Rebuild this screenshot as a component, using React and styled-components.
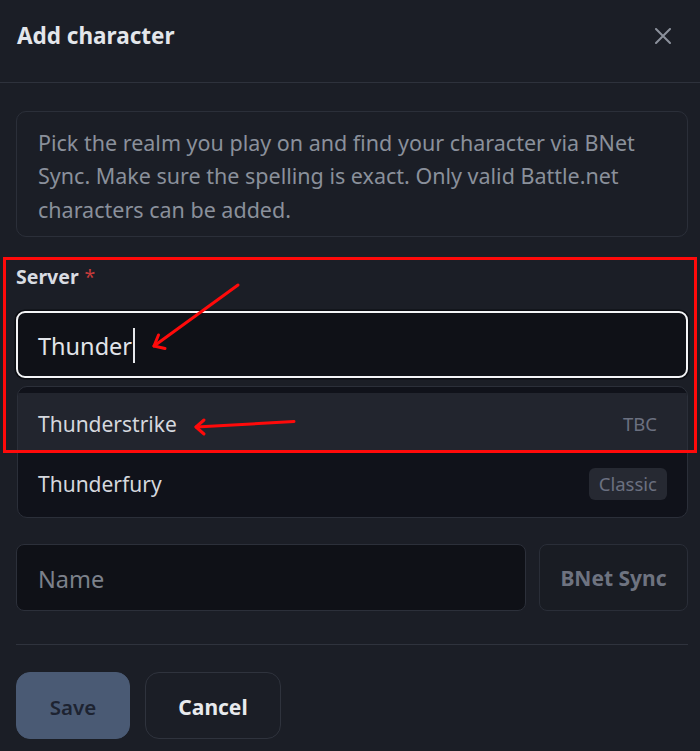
import React from "react";
import styled, { createGlobalStyle } from "styled-components";

const GlobalStyle = createGlobalStyle`
  html, body {
    margin: 0;
    padding: 0;
    background: #1b1e26;
  }
  body {
    font-family: "Noto Sans", "Open Sans", sans-serif;
    -webkit-font-smoothing: antialiased;
  }
  * { box-sizing: border-box; }
`;

const Page = styled.div`
  position: relative;
  width: 700px;
  min-height: 751px;
  background: #1b1e26;
  overflow: hidden;
`;

const Header = styled.header`
  display: flex;
  align-items: center;
  justify-content: space-between;
  padding: 21px 28px 31px 17px;
  border-bottom: 1px solid #2e323c;
`;

const Title = styled.h2`
  margin: 0;
  font-size: 22.5px;
  line-height: 30px;
  font-weight: 700;
  color: #e3e6eb;
`;

const CloseButton = styled.button`
  display: flex;
  align-items: center;
  justify-content: center;
  width: 18px;
  height: 18px;
  padding: 0;
  border: none;
  background: none;
  color: #8b909b;
  cursor: pointer;
`;

const Body = styled.div`
  display: flex;
  flex-direction: column;
  padding: 28px 12px 12px 16px;
`;

const InfoBox = styled.div`
  border: 1px solid #2b2f39;
  border-radius: 10px;
  padding: 14px 20px 10px 21px;
  font-size: 21.5px;
  line-height: 33.3px;
  color: #8a909b;
`;

const Label = styled.label`
  margin-top: 28px;
  font-size: 19.5px;
  line-height: 24px;
  font-weight: 700;
  color: #d9dce2;
`;

const Required = styled.span`
  color: #c53b3b;
  margin-left: 6px;
  font-weight: 400;
`;

const FocusedField = styled.div`
  display: flex;
  align-items: center;
  margin-top: 22px;
  height: 67px;
  padding: 3px 20px 0;
  border: 2px solid #f4f5f7;
  border-radius: 9px;
  background: #0f1117;
  box-shadow: 0 0 0 1.5px #0c0e13;
  font-size: 23.5px;
  color: #e1e4e9;
`;

const Caret = styled.span`
  display: inline-block;
  width: 1.5px;
  height: 35px;
  margin-left: 1px;
  background: #e6e8ec;
`;

const Dropdown = styled.ul`
  list-style: none;
  margin: 8px 0 0 1px;
  padding: 6px 0 4px;
  border: 1px solid #2b2f39;
  border-radius: 10px;
  background: #10121a;
  overflow: hidden;
`;

const Option = styled.li`
  display: flex;
  align-items: center;
  justify-content: space-between;
  height: 60px;
  padding: 2px 20px 0 20px;
  background: ${(p) => (p.$active ? "#22252e" : "transparent")};
  font-size: 21px;
  color: #d5d8de;
`;

const Tag = styled.span`
  padding: 3px 10px;
  border-radius: 6px;
  font-size: 18.5px;
  line-height: 26px;
  color: #6b7080;
  background: ${(p) => (p.$plain ? "transparent" : "#262932")};
`;

const Row = styled.div`
  display: flex;
  gap: 13px;
  margin-top: 26px;
`;

const NameInput = styled.input`
  flex: 1;
  min-width: 0;
  height: 67px;
  padding: 3px 21px 0;
  border: 1px solid #2c303a;
  border-radius: 8px;
  background: #0f1117;
  font-family: inherit;
  font-size: 23.5px;
  color: #e1e4e9;
  outline: none;
  &::placeholder {
    color: #7c818b;
  }
`;

const SyncButton = styled.button`
  width: 149px;
  height: 67px;
  padding: 2px 0 0;
  border: 1px solid #2a2e38;
  border-radius: 8px;
  background: #191c23;
  font-family: inherit;
  font-size: 21px;
  font-weight: 700;
  color: #6e7380;
`;

const Divider = styled.hr`
  margin: 33px 0 0;
  border: none;
  border-top: 1px solid #2f333d;
`;

const Actions = styled.div`
  display: flex;
  gap: 15px;
  margin-top: 27px;
`;

const ActionButton = styled.button`
  height: 67px;
  width: ${(p) => p.$width}px;
  padding: 4px 0 0;
  border-radius: 14px;
  font-family: inherit;
  font-size: ${(p) => (p.$primary ? 20.5 : 21)}px;
  font-weight: ${(p) => (p.$primary ? 600 : 700)};
  border: 1px solid ${(p) => (p.$primary ? "#4a5a74" : "#2f333d")};
  background: ${(p) => (p.$primary ? "#4a5a74" : "transparent")};
  color: ${(p) => (p.$primary ? "#1d2331" : "#e8eaed")};
`;

const RedFrame = styled.div`
  position: absolute;
  left: 3px;
  top: 257px;
  width: 694px;
  height: 196px;
  border: 3px solid #ff0a0a;
  pointer-events: none;
`;

const ArrowLayer = styled.svg`
  position: absolute;
  left: 0;
  top: 0;
  pointer-events: none;
`;

export default function App() {
  return (
    <Page>
      <GlobalStyle />
      <Header>
        <Title>Add character</Title>
        <CloseButton aria-label="Close">
          <svg width="16" height="16" viewBox="0 0 16 16" fill="none">
            <path d="M1 1L15 15M15 1L1 15" stroke="currentColor" strokeWidth="2" strokeLinecap="round" />
          </svg>
        </CloseButton>
      </Header>
      <Body>
        <InfoBox>
          Pick the realm you play on and find your character via BNet Sync. Make sure the spelling is exact. Only valid Battle.net characters can be added.
        </InfoBox>
        <Label>
          Server<Required>*</Required>
        </Label>
        <FocusedField>
          Thunder
          <Caret />
        </FocusedField>
        <Dropdown>
          <Option $active>
            Thunderstrike
            <Tag $plain>TBC</Tag>
          </Option>
          <Option>
            Thunderfury
            <Tag>Classic</Tag>
          </Option>
        </Dropdown>
        <Row>
          <NameInput placeholder="Name" />
          <SyncButton>BNet Sync</SyncButton>
        </Row>
        <Divider />
        <Actions>
          <ActionButton $primary $width={114}>Save</ActionButton>
          <ActionButton $width={136}>Cancel</ActionButton>
        </Actions>
      </Body>
      <RedFrame />
      <ArrowLayer width="700" height="751" viewBox="0 0 700 751">
        <g stroke="#ff0a0a" strokeWidth="3" strokeLinecap="round" strokeLinejoin="round" fill="none">
          <path d="M238 285L154 346" />
          <path d="M154 346L165 348.5M154 346L158.5 335" />
          <path d="M294 421.5L196 427" />
          <path d="M196 427L204 420M196 427L204 434" />
        </g>
      </ArrowLayer>
    </Page>
  );
}
